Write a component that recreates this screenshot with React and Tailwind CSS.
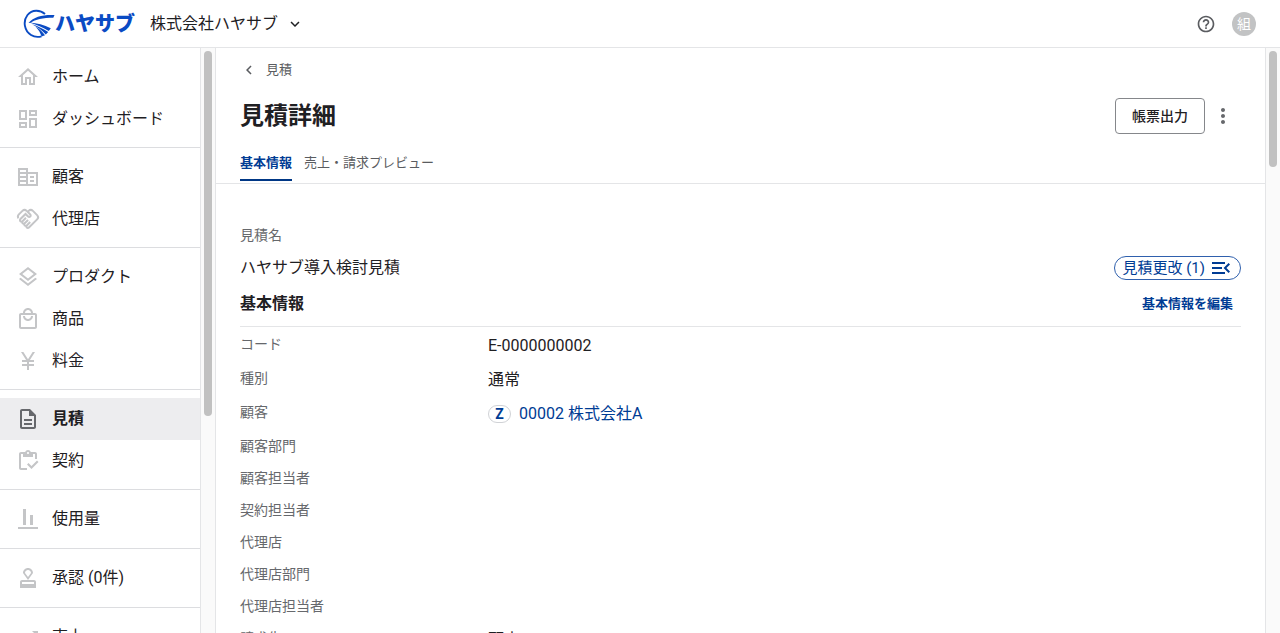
import {
  MdChevronLeft,
  MdCurrencyYen,
  MdExpandMore,
  MdHelpOutline,
  MdMenuOpen,
  MdMoreVert,
  MdOutlineApproval,
  MdOutlineDashboard,
  MdOutlineDescription,
  MdOutlineHandshake,
  MdOutlineHome,
  MdOutlineInventory,
  MdOutlineLayers,
  MdOutlineLocalMall,
  MdTrendingUp,
} from 'react-icons/md';

function CompanyIcon({ className }) {
  return (
    <svg viewBox="0 0 24 24" className={className} fill="none" stroke="currentColor" strokeWidth="2" aria-hidden="true">
      <path d="M3 4h8v16H3zM11 8h10v12H11M3 8h8M3 12h8M3 16h8" />
      <path d="M14 12h4M14 16h4" />
    </svg>
  );
}

function UsageIcon({ className }) {
  return (
    <svg viewBox="0 0 24 24" className={className} fill="currentColor" aria-hidden="true">
      <path d="M2 20h20v2H2zM7 2h3v16H7zM14 8h3v10h-3z" />
    </svg>
  );
}

const NAV_GROUPS = [
  [
    { label: 'ホーム', icon: MdOutlineHome },
    { label: 'ダッシュボード', icon: MdOutlineDashboard },
  ],
  [
    { label: '顧客', icon: CompanyIcon },
    { label: '代理店', icon: MdOutlineHandshake },
  ],
  [
    { label: 'プロダクト', icon: MdOutlineLayers },
    { label: '商品', icon: MdOutlineLocalMall },
    { label: '料金', icon: MdCurrencyYen },
  ],
  [
    { label: '見積', icon: MdOutlineDescription, active: true },
    { label: '契約', icon: MdOutlineInventory },
  ],
  [{ label: '使用量', icon: UsageIcon }],
  [{ label: '承認 (0件)', icon: MdOutlineApproval }],
  [{ label: '売上', icon: MdTrendingUp }],
];

const FIELDS = [
  { label: 'コード', value: 'E-0000000002' },
  { label: '種別', value: '通常' },
  { label: '顧客', value: '00002 株式会社A', link: true },
  { label: '顧客部門' },
  { label: '顧客担当者' },
  { label: '契約担当者' },
  { label: '代理店' },
  { label: '代理店部門' },
  { label: '代理店担当者' },
  { label: '請求先', value: '顧客' },
];

function Logo() {
  return (
    <a href="#" className="flex items-center text-[#0a4bc4]">
      <svg viewBox="0 0 32 30" className="h-[30px] w-8" fill="none" stroke="currentColor" aria-hidden="true">
        <path d="M22 5C17 0.500 9 0.500 4.500 6C-0.500 12.500 1.500 22 8 26C11.500 28.200 15 28.300 18.500 27.300" strokeWidth="1.900" />
        <path d="M5.500 14C11 7.500 20 5.500 31.500 6L30.300 8.800C20 8.800 12 10.500 8 13.800z" fill="currentColor" stroke="none" />
        <path d="M6.500 13.400C14 14 21 15.800 27.800 19.300L25.800 22C20 18.200 13.500 15.500 6.500 13.400z" fill="currentColor" stroke="none" />
        <path d="M9 15.200C15 17 20.500 20 25.200 23L22.800 25.500C19 21.300 14.500 18 9 15.200z" fill="currentColor" stroke="none" />
        <path d="M12.500 17.700C16 19.500 19.500 22.500 22 26.300L18.600 27.600C17.500 23.700 15.500 20.700 12.500 17.700z" fill="currentColor" stroke="none" />
      </svg>
      <span className="text-xl leading-6 font-black">ハヤサブ</span>
    </a>
  );
}

function Header() {
  return (
    <header className="flex h-12 shrink-0 items-center justify-between border-b border-[#e4e5e7] pr-6 pl-[23px]">
      <div className="flex items-center gap-[15px]">
        <Logo />
        <button type="button" className="flex items-center gap-2">
          株式会社ハヤサブ
          <MdExpandMore className="size-[18px]" />
        </button>
      </div>
      <div className="flex items-center gap-4">
        <button type="button" aria-label="ヘルプ" className="text-[#5a5c60]">
          <MdHelpOutline className="size-5" />
        </button>
        <button type="button" className="size-6 rounded-full bg-[#c2c3c4] text-sm leading-6 text-white">組</button>
      </div>
    </header>
  );
}

function Sidebar() {
  return (
    <nav className="w-[201px] shrink-0 overflow-hidden border-r border-[#e4e5e7]">
      {NAV_GROUPS.map((items) => (
        <ul
          key={items[0].label}
          className={`border-b border-[#dcdde0] pt-2 ${items.length === 1 ? 'pb-2' : 'pb-[7px]'}`}
        >
          {items.map(({ label, icon: Icon, active }) => (
            <li key={label}>
              <a
                href="#"
                className={`flex h-[42px] items-center gap-3 px-4 ${active ? 'bg-[#ededef] font-bold' : ''}`}
              >
                <Icon className={`size-6 ${active ? 'text-[#66686c]' : 'text-[#c4c5c7]'}`} />
                {label}
              </a>
            </li>
          ))}
        </ul>
      ))}
    </nav>
  );
}

function ScrollTrack({ thumb }) {
  return (
    <div className="w-[14px] shrink-0 bg-[#fafafa] px-[3px] py-[3px]" aria-hidden="true">
      <div className={`w-2 rounded-full bg-[#c1c1c1] ${thumb}`} />
    </div>
  );
}

function PageHeader() {
  return (
    <div className="border-b border-[#e4e5e7] px-6 pt-3">
      <a href="#" className="flex items-center gap-2 text-[13px] leading-5 text-[#5a5c60]">
        <MdChevronLeft className="size-[18px]" />
        見積
      </a>
      <div className="mt-[18px] flex h-9 items-center justify-between pr-[6px]">
        <h1 className="text-2xl font-bold">見積詳細</h1>
        <div className="flex items-center gap-[6px]">
          <button type="button" className="h-9 rounded border border-[#85878b] px-4 text-sm font-medium">
            帳票出力
          </button>
          <button type="button" aria-label="メニュー" className="text-[#66686c]">
            <MdMoreVert className="size-6" />
          </button>
        </div>
      </div>
      <div className="mt-[17px] flex gap-3 pb-[2px] text-[13px] leading-6">
        <a href="#" className="border-b-2 border-[#003785] pb-1 font-bold text-[#003c94]">基本情報</a>
        <a href="#" className="text-[#5a5c60]">売上・請求プレビュー</a>
      </div>
    </div>
  );
}

function FieldValue({ value, link }) {
  if (!link) return value;

  return (
    <a href="#" className="flex items-center gap-2 text-[#003c94]">
      <span className="flex h-[18px] w-[23px] items-center justify-center rounded-full border border-[#d0d2d6] text-sm leading-4 font-bold">
        Z
      </span>
      {value}
    </a>
  );
}

function Details() {
  return (
    <div className="px-6 pt-10">
      <div className="text-sm leading-[22px] text-[#66686c]">見積名</div>
      <div className="mt-[10px] flex h-6 items-center justify-between">
        <span>ハヤサブ導入検討見積</span>
        <button
          type="button"
          className="flex h-6 items-center gap-1 rounded-full border border-[#2f60ad] px-[7px] text-[15px] text-[#003c94]"
        >
          見積更改 (1)
          <MdMenuOpen className="size-6" />
        </button>
      </div>
      <div className="mt-3 flex h-[35px] items-start justify-between border-b border-[#e4e5e7]">
        <h2 className="font-bold">基本情報</h2>
        <a href="#" className="pr-2 text-[13px] leading-6 font-bold text-[#003c94]">基本情報を編集</a>
      </div>
      <dl className="pt-px">
        {FIELDS.map((field) => (
          <div key={field.label} className="flex py-1">
            <dt className="w-[248px] shrink-0 py-px text-sm leading-[22px] text-[#66686c]">{field.label}</dt>
            <dd className="pt-[2px]">
              <FieldValue value={field.value} link={field.link} />
            </dd>
          </div>
        ))}
      </dl>
    </div>
  );
}

export default function App() {
  return (
    <div className="flex h-screen flex-col overflow-hidden bg-white font-[Roboto,'Noto_Sans_CJK_JP',sans-serif] text-base leading-6 text-[#1f2023]">
      <Header />
      <div className="flex min-h-0 flex-1">
        <Sidebar />
        <ScrollTrack thumb="h-[63%]" />
        <main className="min-w-0 flex-1 overflow-hidden border-x border-[#e4e5e7]">
          <PageHeader />
          <Details />
        </main>
        <ScrollTrack thumb="h-1/5" />
      </div>
    </div>
  );
}
